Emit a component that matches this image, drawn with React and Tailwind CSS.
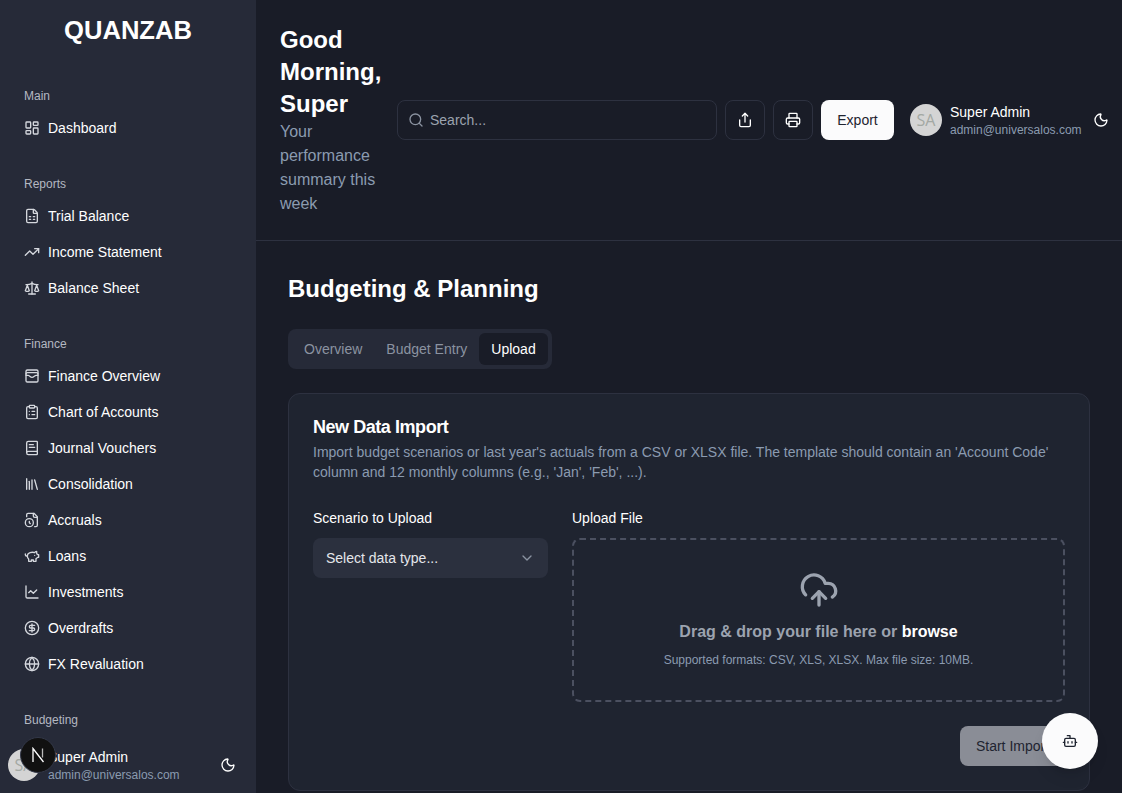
import {
    LayoutDashboard,
    FileSpreadsheet,
    TrendingUp,
    Scale,
    WalletCards,
    ClipboardList,
    BookText,
    Library,
    CircleDollarSign,
    ChartLine,
    Globe,
    Moon,
    Search,
    Share,
    Printer,
    ChevronDown,
    CloudUpload,
    Bot,
} from "lucide-react";

// older lucide shapes, the current package draws these two differently
function FileClockIcon({ className }) {
    return (
        <svg width="16" height="16" viewBox="0 0 24 24" fill="none" stroke="currentColor" strokeWidth="2" strokeLinecap="round" strokeLinejoin="round" className={className}>
            <path d="M16 22h2a2 2 0 0 0 2-2V7l-5-5H6a2 2 0 0 0-2 2v3" />
            <path d="M14 2v4a2 2 0 0 0 2 2h4" />
            <circle cx="8" cy="16" r="6" />
            <path d="M9.5 17.5 8 16.25V14" />
        </svg>
    );
}

function PiggyIcon({ className }) {
    return (
        <svg width="16" height="16" viewBox="0 0 24 24" fill="none" stroke="currentColor" strokeWidth="2" strokeLinecap="round" strokeLinejoin="round" className={className}>
            <path d="M19 5c-1.5 0-2.8 1.4-3 2-3.5-1.5-11-.3-11 5 0 1.8 0 3 2 4.5V20h4v-2h3v2h4v-4c1-.5 1.7-1 2-2h2v-4h-2c0-1-.5-1.5-1-2V5z" />
            <path d="M2 9v1c0 1.1.9 2 2 2h1" />
            <path d="M16 11h.01" />
        </svg>
    );
}

const NAV = [
    { label: "Main", items: [["Dashboard", LayoutDashboard]] },
    {
        label: "Reports",
        items: [
            ["Trial Balance", FileSpreadsheet],
            ["Income Statement", TrendingUp],
            ["Balance Sheet", Scale],
        ],
    },
    {
        label: "Finance",
        items: [
            ["Finance Overview", WalletCards],
            ["Chart of Accounts", ClipboardList],
            ["Journal Vouchers", BookText],
            ["Consolidation", Library],
            ["Accruals", FileClockIcon],
            ["Loans", PiggyIcon],
            ["Investments", ChartLine],
            ["Overdrafts", CircleDollarSign],
            ["FX Revaluation", Globe],
        ],
    },
    { label: "Budgeting", items: [] },
];

function UserBlock() {
    return (
        <div className="flex items-center gap-2">
            <div className="w-8 h-8 shrink-0 rounded-full bg-[#d4d4d4] flex items-center justify-center font-['Open_Sans',sans-serif] font-medium text-[16px] text-[#a3a8a3]">
                SA
            </div>
            <div className="whitespace-nowrap">
                <div className="text-sm leading-5 text-white">Super Admin</div>
                <div className="text-xs leading-4 text-[#8b9bb0]">admin@universalos.com</div>
            </div>
        </div>
    );
}

function Sidebar() {
    return (
        <aside className="w-[256px] shrink-0 h-full bg-[#262a38] flex flex-col overflow-hidden">
            <div className="h-[60px] shrink-0 flex items-center justify-center text-[25.6px] font-bold text-white">
                QUANZAB
            </div>
            <nav className="flex-1 overflow-hidden pt-[23px]">
                {NAV.map((group) => (
                    <div key={group.label} className="mb-[25px]">
                        <div className="h-[24px] mb-[3px] pt-[2px] px-6 flex items-center text-xs text-[#b4b8c2]">{group.label}</div>
                        {group.items.map(([name, Icon]) => (
                            <div key={name} className="h-9 px-6 flex items-center gap-2 text-sm text-white">
                                <Icon size={16} className="text-[#d5d8de]" />
                                <span>{name}</span>
                            </div>
                        ))}
                    </div>
                ))}
            </nav>
            <div className="h-[57px] shrink-0 pl-2 pr-5 flex items-center justify-between">
                <UserBlock />
                <Moon size={16} className="text-white" />
            </div>
        </aside>
    );
}

function Header() {
    return (
        <header className="h-[241px] shrink-0 px-6 flex items-center gap-4 border-b border-[#2d3140]">
            <div className="w-[101px] shrink-0">
                <h1 className="text-2xl leading-8 font-bold text-white">Good Morning, Super</h1>
                <p className="text-base leading-6 text-[#8b9bb0]">Your performance summary this week</p>
            </div>
            <div className="w-[320px] h-10 shrink-0 rounded-lg border border-[#2d3140] flex items-center gap-[6px] px-[10px] text-sm text-[#9ca3af]">
                <Search size={16} className="text-[#8b93a1]" />
                <span>Search...</span>
            </div>
            <div className="flex items-center gap-2 -ml-2 shrink-0">
                <button className="w-10 h-10 rounded-lg border border-[#2d3140] flex items-center justify-center text-white">
                    <Share size={16} />
                </button>
                <button className="w-10 h-10 rounded-lg border border-[#2d3140] flex items-center justify-center text-white">
                    <Printer size={16} />
                </button>
                <button className="w-[73px] h-10 rounded-lg bg-[#fbfbfc] text-sm text-[#1f2430]">Export</button>
            </div>
            <div className="shrink-0">
                <UserBlock />
            </div>
            <Moon size={16} className="shrink-0 -ml-[5px] text-white" />
        </header>
    );
}

function UploadCard() {
    return (
        <div className="rounded-xl border border-[#2d3140] bg-[#1f2430] p-6">
            <h3 className="text-lg leading-[18px] font-semibold tracking-tight text-white">New Data Import</h3>
            <p className="mt-[6px] text-sm leading-5 text-[#8b9bb0]">
                Import budget scenarios or last year's actuals from a CSV or XLSX file. The template should contain an 'Account Code' column and 12 monthly columns (e.g., 'Jan', 'Feb', ...).
            </p>
            <div className="mt-[26px] flex gap-6">
                <div className="w-[235px] shrink-0">
                    <div className="text-sm leading-5 text-white">Scenario to Upload</div>
                    <div className="mt-[10px] h-10 rounded-lg bg-[#2b303e] px-[13px] flex items-center justify-between text-sm text-[#e5e7eb]">
                        <span>Select data type...</span>
                        <ChevronDown size={16} className="text-[#8b93a1]" />
                    </div>
                </div>
                <div className="flex-1">
                    <div className="text-sm leading-5 text-white">Upload File</div>
                    <div className="mt-[10px] h-[164px] pt-[30px] rounded-lg border-2 border-dashed border-[#4b5060] flex flex-col items-center">
                        <CloudUpload size={40} strokeWidth={2} className="text-[#9ca3af]" />
                        <div className="mt-[10px] text-base leading-6 font-semibold text-[#9ca3af]">
                            Drag & drop your file here or <span className="text-white">browse</span>
                        </div>
                        <div className="mt-2 text-xs leading-4 text-[#8b9bb0]">
                            Supported formats: CSV, XLS, XLSX. Max file size: 10MB.
                        </div>
                    </div>
                </div>
            </div>
            <div className="mt-6 flex justify-end">
                <button className="w-[105px] h-10 rounded-lg bg-[#8a8d96] text-sm text-[#1f2430]">Start Import</button>
            </div>
        </div>
    );
}

export default function App() {
    return (
        <div className="relative h-screen w-full flex overflow-hidden bg-[#191c27] font-['Liberation_Sans',Arial,sans-serif]">
            <Sidebar />
            <main className="flex-1 min-w-0 flex flex-col overflow-hidden">
                <Header />
                <div className="p-8 pb-0">
                    <h2 className="text-2xl leading-8 font-bold text-white">Budgeting & Planning</h2>
                    <div className="mt-6 inline-flex h-10 items-center rounded-lg bg-[#262a38] p-1 text-sm">
                        <span className="px-3 text-[#8b93a1]">Overview</span>
                        <span className="px-3 text-[#8b93a1]">Budget Entry</span>
                        <span className="h-8 px-3 flex items-center rounded-md bg-[#191c27] text-white">Upload</span>
                    </div>
                    <div className="mt-6">
                        <UploadCard />
                    </div>
                </div>
            </main>

            {/* floating stuff */}
            <button className="absolute right-6 bottom-6 w-14 h-14 rounded-full bg-[#fbfbfc] shadow-lg flex items-center justify-center text-[#1f2430]">
                <Bot size={16} />
            </button>
            <div className="absolute left-[20px] bottom-[20px] w-9 h-9 rounded-full bg-[#111] border border-[#333848] flex items-center justify-center">
                <svg width="16" height="16" viewBox="0 0 16 16" fill="none" stroke="#fff" strokeWidth="1.3">
                    <path d="M3 15V1.5L13.5 15" />
                    <path d="M12.5 1.5v9" strokeOpacity="0.7" />
                </svg>
            </div>
        </div>
    );
}
